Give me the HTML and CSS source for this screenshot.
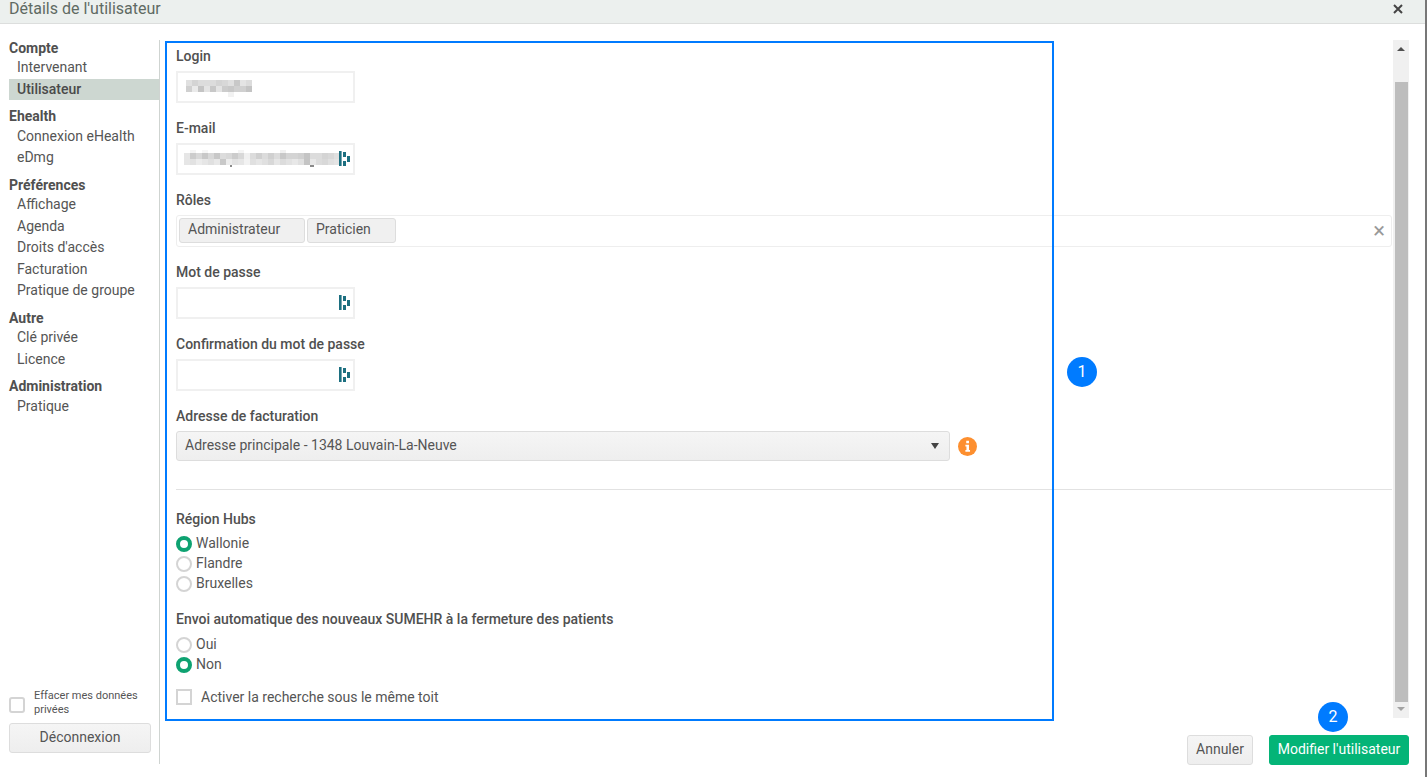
FILE: index.html
```html
<!DOCTYPE html>
<html lang="fr">
<head>
<meta charset="utf-8">
<title>Détails de l'utilisateur</title>
<link rel="stylesheet" href="styles.css">
</head>
<body>
<div class="dialog">
  <header class="titlebar">
    <h1 class="title">Détails de l'utilisateur</h1>
    <svg class="close" width="10" height="10" viewBox="0 0 10 10"><path d="M1 1l8 8M9 1l-8 8" stroke="#444" stroke-width="2"/></svg>
  </header>
  <div class="main">
    <nav class="sidebar">
      <div class="menu">
        <div class="group">Compte</div>
        <a class="item">Intervenant</a>
        <a class="item active">Utilisateur</a>
        <div class="group">Ehealth</div>
        <a class="item">Connexion eHealth</a>
        <a class="item">eDmg</a>
        <div class="group">Préférences</div>
        <a class="item">Affichage</a>
        <a class="item">Agenda</a>
        <a class="item">Droits d'accès</a>
        <a class="item">Facturation</a>
        <a class="item">Pratique de groupe</a>
        <div class="group">Autre</div>
        <a class="item">Clé privée</a>
        <a class="item">Licence</a>
        <div class="group">Administration</div>
        <a class="item">Pratique</a>
      </div>
      <label class="erase"><span class="box round"></span><span class="erase-text">Effacer mes données privées</span></label>
      <button class="btn logout">Déconnexion</button>
    </nav>
    <section class="content">
      <div class="panel">
        <form class="form">
          <div class="field">
            <div class="label">Login</div>
            <div class="input">
              <svg class="mosaic" width="66" height="17" viewBox="0 0 66 17" shape-rendering="crispEdges">
                <rect x="0" y="0" width="6" height="6" fill="#e0e0e0"/><rect x="6" y="0" width="6" height="6" fill="#d4d4d4"/><rect x="12" y="0" width="18" height="6" fill="#dcdcdc"/><rect x="30" y="0" width="6" height="6" fill="#d4d4d4"/><rect x="36" y="0" width="6" height="6" fill="#d8d8d8"/><rect x="42" y="0" width="6" height="6" fill="#e0e0e0"/><rect x="48" y="0" width="6" height="6" fill="#c8c8c8"/><rect x="54" y="0" width="6" height="6" fill="#e4e4e4"/><rect x="60" y="0" width="6" height="6" fill="#dcdcdc"/>
                <rect x="0" y="6" width="6" height="6" fill="#d0d0d0"/><rect x="6" y="6" width="6" height="6" fill="#eaeaea"/><rect x="12" y="6" width="6" height="6" fill="#c4c4c4"/><rect x="18" y="6" width="6" height="6" fill="#e4e4e4"/><rect x="24" y="6" width="6" height="6" fill="#c8c8c8"/><rect x="30" y="6" width="6" height="6" fill="#e4e4e4"/><rect x="36" y="6" width="6" height="6" fill="#cccccc"/><rect x="42" y="6" width="6" height="6" fill="#c8c8c8"/><rect x="48" y="6" width="6" height="6" fill="#d0d0d0"/><rect x="54" y="6" width="6" height="6" fill="#d0d0d0"/><rect x="60" y="6" width="6" height="6" fill="#c4c4c4"/>
                <rect x="42" y="12" width="6" height="5" fill="#f2f2f2"/>
              </svg>
            </div>
          </div>
          <div class="field">
            <div class="label">E-mail</div>
            <div class="input input-email">
              <svg class="mosaic" width="156" height="18" viewBox="0 0 156 18" shape-rendering="crispEdges">
                <rect x="6" y="0" width="6" height="3" fill="#f4f4f4"/><rect x="18" y="0" width="6" height="3" fill="#f6f6f6"/><rect x="54" y="0" width="6" height="3" fill="#f4f4f4"/><rect x="96" y="0" width="6" height="3" fill="#f0f0f0"/>
                <rect x="0" y="3" width="6" height="6" fill="#e6e6e6"/><rect x="6" y="3" width="6" height="6" fill="#cccccc"/><rect x="12" y="3" width="6" height="6" fill="#d8d8d8"/><rect x="18" y="3" width="6" height="6" fill="#c8c8c8"/><rect x="24" y="3" width="6" height="6" fill="#d8d8d8"/><rect x="30" y="3" width="6" height="6" fill="#c8c8c8"/><rect x="36" y="3" width="6" height="6" fill="#dcdcdc"/><rect x="42" y="3" width="6" height="6" fill="#d8d8d8"/><rect x="48" y="3" width="6" height="6" fill="#cccccc"/><rect x="54" y="3" width="6" height="6" fill="#d8d8d8"/><rect x="60" y="3" width="6" height="6" fill="#f0f0f0"/><rect x="66" y="3" width="6" height="6" fill="#dcdcdc"/><rect x="72" y="3" width="6" height="6" fill="#d0d0d0"/><rect x="78" y="3" width="6" height="6" fill="#dcdcdc"/><rect x="84" y="3" width="6" height="6" fill="#d0d0d0"/><rect x="90" y="3" width="6" height="6" fill="#dcdcdc"/><rect x="96" y="3" width="6" height="6" fill="#c8c8c8"/><rect x="102" y="3" width="12" height="6" fill="#d4d4d4"/><rect x="114" y="3" width="6" height="6" fill="#d0d0d0"/><rect x="120" y="3" width="6" height="6" fill="#c4c4c4"/><rect x="126" y="3" width="12" height="6" fill="#dcdcdc"/><rect x="138" y="3" width="6" height="6" fill="#d4d4d4"/><rect x="144" y="3" width="6" height="6" fill="#d8d8d8"/><rect x="150" y="3" width="6" height="6" fill="#e0e0e0"/>
                <rect x="0" y="9" width="6" height="6" fill="#e6e6e6"/><rect x="6" y="9" width="6" height="6" fill="#e2e2e2"/><rect x="12" y="9" width="6" height="6" fill="#ececec"/><rect x="18" y="9" width="6" height="6" fill="#e6e6e6"/><rect x="24" y="9" width="6" height="6" fill="#e0e0e0"/><rect x="30" y="9" width="6" height="6" fill="#e8e8e8"/><rect x="36" y="9" width="6" height="6" fill="#c8c8c8"/><rect x="42" y="9" width="6" height="6" fill="#ececec"/><rect x="48" y="9" width="6" height="6" fill="#e2e2e2"/><rect x="54" y="9" width="6" height="6" fill="#e6e6e6"/><rect x="60" y="9" width="6" height="6" fill="#f2f2f2"/><rect x="66" y="9" width="6" height="6" fill="#e0e0e0"/><rect x="72" y="9" width="6" height="6" fill="#e6e6e6"/><rect x="78" y="9" width="6" height="6" fill="#e0e0e0"/><rect x="84" y="9" width="6" height="6" fill="#d8d8d8"/><rect x="90" y="9" width="6" height="6" fill="#e6e6e6"/><rect x="96" y="9" width="6" height="6" fill="#dcdcdc"/><rect x="102" y="9" width="6" height="6" fill="#e2e2e2"/><rect x="108" y="9" width="6" height="6" fill="#e8e8e8"/><rect x="114" y="9" width="6" height="6" fill="#e0e0e0"/><rect x="120" y="9" width="6" height="6" fill="#c4c4c4"/><rect x="126" y="9" width="6" height="6" fill="#e8e8e8"/><rect x="132" y="9" width="6" height="6" fill="#dcdcdc"/><rect x="138" y="9" width="6" height="6" fill="#d8d8d8"/><rect x="144" y="9" width="6" height="6" fill="#e0e0e0"/><rect x="150" y="9" width="6" height="6" fill="#e4e4e4"/>
                <rect x="46" y="15" width="2" height="2" fill="#8a8a8a"/><rect x="126" y="15" width="4" height="2" fill="#8a8a8a"/>
              </svg>
              <svg class="pm" width="11" height="16" viewBox="0 0 11 16"><path d="M0 0h2.6v15H0zM4 1h3v5H4zM4 10h3v5H4zM8 5h3v6H8z" fill="#1c6f80"/></svg>
            </div>
          </div>
          <div class="field">
            <div class="label">Rôles</div>
            <div class="multi">
              <span class="tag tag-admin">Administrateur</span>
              <span class="tag tag-prat">Praticien</span>
              <span class="clear">×</span>
            </div>
          </div>
          <div class="field">
            <div class="label">Mot de passe</div>
            <div class="input">
              <svg class="pm" width="11" height="16" viewBox="0 0 11 16"><path d="M0 0h2.6v15H0zM4 1h3v5H4zM4 10h3v5H4zM8 5h3v6H8z" fill="#1c6f80"/></svg>
            </div>
          </div>
          <div class="field">
            <div class="label">Confirmation du mot de passe</div>
            <div class="input">
              <svg class="pm" width="11" height="16" viewBox="0 0 11 16"><path d="M0 0h2.6v15H0zM4 1h3v5H4zM4 10h3v5H4zM8 5h3v6H8z" fill="#1c6f80"/></svg>
            </div>
          </div>
          <div class="field last">
            <div class="label">Adresse de facturation</div>
            <div class="select-row">
              <div class="select">
                <span class="select-text">Adresse principale - 1348 Louvain-La-Neuve</span>
                <span class="caret"></span>
              </div>
              <svg class="info" width="19" height="19" viewBox="0 0 18 18"><circle cx="9" cy="9" r="9" fill="#fd8f2f"/><path d="M7.8 3.6h2.6v2.4H7.8zM7 7.4h3.4v5h1v1.6H7v-1.6h1v-3.4H7z" fill="#fff"/></svg>
            </div>
          </div>
          <hr class="sep">
          <div class="label region">Région Hubs</div>
          <div class="radio"><span class="dot on"></span>Wallonie</div>
          <div class="radio"><span class="dot"></span>Flandre</div>
          <div class="radio"><span class="dot"></span>Bruxelles</div>
          <div class="label sumehr">Envoi automatique des nouveaux SUMEHR à la fermeture des patients</div>
          <div class="radio"><span class="dot"></span>Oui</div>
          <div class="radio"><span class="dot on"></span>Non</div>
          <label class="check"><span class="box"></span>Activer la recherche sous le même toit</label>
        </form>
        <div class="scrollbar">
          <span class="arrow up"></span>
          <span class="thumb"></span>
          <span class="arrow down"></span>
        </div>
      </div>
      <footer class="actions">
        <button class="btn cancel">Annuler</button>
        <button class="btn primary">Modifier l'utilisateur</button>
      </footer>
    </section>
  </div>
</div>
<div class="callout-box"></div>
<div class="badge badge-1">1</div>
<div class="badge badge-2">2</div>
</body>
</html>
```
FILE: styles.css
```css
* { box-sizing: border-box; }
html, body { margin: 0; padding: 0; height: 777px; overflow: hidden; background: #fff; }
body { font-family: Roboto, "Liberation Sans", sans-serif; font-size: 14px; color: #4a4a4a; position: relative; }
.dialog { display: flex; flex-direction: column; height: 777px; border-right: 2px solid #777; }
.titlebar { height: 24px; flex: none; display: flex; align-items: flex-start; justify-content: space-between; background: #ecf0ee; border-bottom: 1px solid #dcdedd; padding: 0 22px 0 9px; overflow: hidden; }
.title { margin: -1px 0 0; font-size: 16px; font-weight: 400; line-height: 19px; color: #5f6a63; }
.close { margin-top: 4px; }
.main { flex: 1; display: flex; padding: 16px 16px 13px 9px; }
.sidebar { width: 151px; flex: none; display: flex; flex-direction: column; position: relative; }
.sidebar::after { content: ""; position: absolute; right: 0; top: 0; bottom: 1px; width: 1px; background: #cfd4d1; }
.menu { flex: 1; width: 150px; }
.group { font-weight: 700; line-height: 18px; height: 18.5px; margin-top: 7px; color: #505050; }
.group:first-child { margin-top: -1.5px; }
.item { display: block; height: 21.5px; line-height: 21.5px; padding-left: 8px; color: #555; }
.active { background: #cdd7d1; color: #4a4a4a; font-weight: 500; }
.erase { display: flex; align-items: center; gap: 9px; width: 142px; margin-bottom: 6px; }
.erase > .box { margin-top: 3px; }
.erase-text { font-size: 11px; line-height: 14px; color: #555; }
.box { width: 16px; height: 16px; border: 2px solid #d4d4d4; background: #fff; flex: none; display: inline-block; }
.round { border-radius: 3px; }
.btn { font-family: inherit; border-radius: 3px; border: 1px solid #ddd; background: linear-gradient(#f5f5f5, #eeeeee); color: #555; cursor: pointer; padding: 0 0 2px; }
.logout { width: 142px; height: 30px; font-size: 14px; margin-bottom: 12px; }
.content { flex: 1; display: flex; flex-direction: column; min-width: 0; padding-left: 6px; }
.panel { flex: 1; display: flex; min-height: 0; }
.form { flex: 1; padding: 6px 0 0 10px; min-width: 0; }
.field { height: 72px; }
.label { height: 20px; line-height: 20px; margin-bottom: 5px; font-weight: 500; color: #505050; }
.input { width: 179px; height: 32px; border: 2px solid #f0f0f0; display: flex; align-items: flex-start; padding: 7px 0 0 8px; position: relative; }
.input-email { padding: 5px 0 0 6px; }
.mosaic { display: block; flex: none; }
.pm { position: absolute; right: 3px; top: 6px; }
.multi { height: 32px; border: 1px solid #eee; border-radius: 3px; display: flex; align-items: center; padding: 0 2px; gap: 2px; position: relative; }
.tag { height: 25px; line-height: 21px; border: 1px solid #ddd; border-radius: 3px; background: #f0f0f0; padding-left: 8px; color: #555; margin-top: -2px; }
.tag-admin { width: 126px; }
.tag-prat { width: 89px; }
.clear { position: absolute; right: 6px; top: 4px; font-size: 22px; line-height: 22px; color: #999; }
.select-row { display: flex; align-items: center; gap: 8px; }
.select { width: 774px; height: 30px; border: 1px solid #ddd; border-radius: 3px; background: linear-gradient(#f5f5f5, #eeeeee); display: flex; align-items: center; justify-content: space-between; padding: 0 10px 1px 8px; color: #555; }
.select-text { margin-bottom: 2px; }
.caret { width: 0; height: 0; border-left: 4px solid transparent; border-right: 4px solid transparent; border-top: 6px solid #444; }
.info { display: block; }
.sep { border: 0; border-top: 1px solid #e2e2e2; margin: 11px 0 19px; }
.region { margin-bottom: 4px; }
.radio { display: flex; align-items: center; height: 20px; gap: 4px; color: #555; }
.dot { width: 16px; height: 16px; border-radius: 50%; border: 2px solid #d4d4d4; background: #fff; flex: none; margin-top: 2px; }
.dot.on { border: 4px solid #0ea271; }
.sumehr { margin: 16px 0 5px; }
.check { display: flex; align-items: center; gap: 9px; height: 20px; margin-top: 13px; color: #555; }
.scrollbar { width: 16px; flex: none; margin-left: 1px; height: 678px; background: #f0f0f0; display: flex; flex-direction: column; align-items: center; }
.arrow { flex: none; width: 0; height: 0; border-left: 4px solid transparent; border-right: 4px solid transparent; }
.up { border-bottom: 4px solid #505050; margin: 7px 0 31px; }
.down { border-top: 4px solid #a3a3a3; margin: 5px 0 7px; }
.thumb { width: 13px; flex: 1; background: #bdbdbd; }
.actions { flex: none; display: flex; justify-content: flex-end; gap: 16px; height: 30px; margin-top: 17px; }
.cancel { width: 66px; height: 30px; font-size: 14px; }
.primary { width: 140px; height: 30px; font-size: 14px; background: #04b477; border-color: #04b477; color: #fff; }
.callout-box { position: absolute; left: 165px; top: 41px; width: 889px; height: 680px; border: 2px solid #007bff; pointer-events: none; }
.badge { position: absolute; width: 30px; height: 30px; border-radius: 50%; background: #007bff; color: #fff; font-size: 16px; line-height: 30px; text-align: center; }
.badge-1 { left: 1067px; top: 357px; }
.badge-2 { left: 1318px; top: 702px; }
```
